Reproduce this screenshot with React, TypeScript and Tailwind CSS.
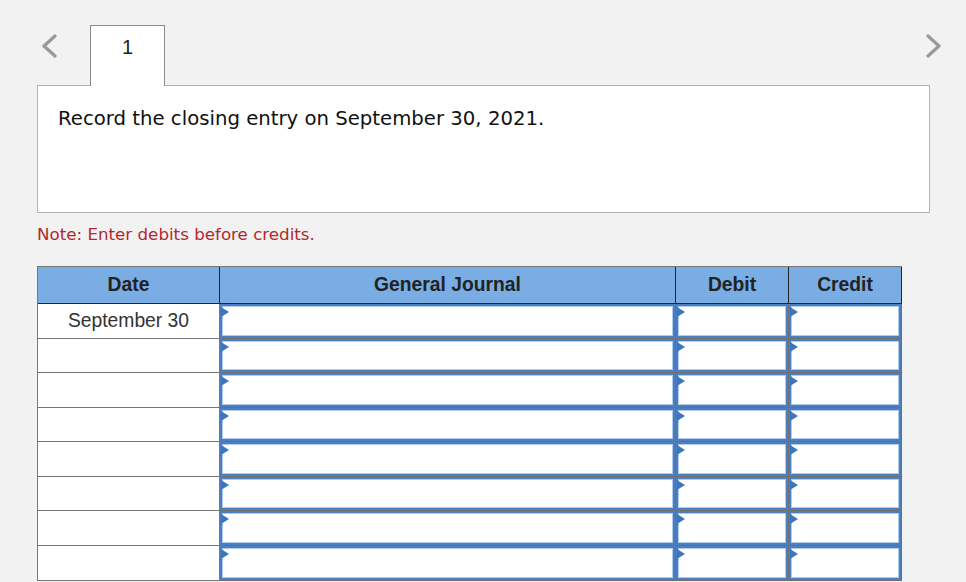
const rowHeights = [
  "h-[35px]",
  "h-[34px]",
  "h-[35px]",
  "h-[34px]",
  "h-[35px]",
  "h-[34px]",
  "h-[35px]",
  "h-[35px]",
];

const dates = ["September 30", "", "", "", "", "", "", ""];

function EntryCell() {
  return (
    <div className="bg-white border-r border-b border-[#6f6f6f]">
      <div className="relative h-full w-full border-2 border-[#4b7fc1] shadow-[inset_0_0_0_1px_#b3cbea]">
        <span className="absolute left-[-1px] top-[1px] w-0 h-0 border-y-[5px] border-y-transparent border-l-[8px] border-l-[#3c76c0]" />
      </div>
    </div>
  );
}

function Chevron({ dir }: { dir: "left" | "right" }) {
  return (
    <svg width="18" height="24" viewBox="0 0 18 24" fill="none">
      <polyline
        points={dir === "left" ? "14,2 3,12 14,22" : "4,2 15,12 4,22"}
        stroke="#999"
        strokeWidth="3.2"
        strokeLinecap="round"
        strokeLinejoin="round"
      />
    </svg>
  );
}

export default function App() {
  return (
    <div className="w-[966px] h-[582px] bg-[#f2f2f2] overflow-hidden font-['DejaVu_Sans',sans-serif]">
      {/* page tabs */}
      <div className="flex h-[85px] pt-[25px]">
        <div className="w-[90px] pl-[41px] pt-[9px]">
          <Chevron dir="left" />
        </div>
        <div className="relative z-10 w-[75px] h-[61px] bg-white border border-b-0 border-[#8a8a8a] flex justify-center pt-[10px] text-[20px] leading-[23px] text-[#222] font-['Liberation_Sans',sans-serif]">
          1
        </div>
        <div className="flex-1" />
        <div className="pt-[9px] pr-[24px]">
          <Chevron dir="right" />
        </div>
      </div>

      {/* question */}
      <div className="ml-[37px] w-[893px] h-[128px] bg-white border border-[#b3b3b3] pt-[21px] pl-[20px] text-[19.7px] leading-[23px] text-[#111]">
        Record the closing entry on September 30, 2021.
      </div>

      <p className="ml-[37px] mt-[11px] text-[16.7px] leading-[20px] text-[#b3282d]">
        Note: Enter debits before credits.
      </p>

      {/* journal */}
      <div className="ml-[37px] mt-[22px] w-[865px] grid grid-cols-[182px_456px_113px_113px] border-l border-t border-[#777] font-['Liberation_Sans',sans-serif] text-[19.3px]">
        {["Date", "General Journal", "Debit", "Credit"].map((h) => (
          <div
            key={h}
            className="h-[37px] flex items-center justify-center bg-[#79ade3] border-r border-b border-[#262626] font-bold text-[#222]"
          >
            {h}
          </div>
        ))}
        {dates.map((d, i) => (
          <div key={i} className="contents">
            <div
              className={`${rowHeights[i]} flex items-center justify-center bg-white border-r border-b border-[#777] text-[#333]`}
            >
              {d}
            </div>
            <EntryCell />
            <EntryCell />
            <EntryCell />
          </div>
        ))}
      </div>
    </div>
  );
}
